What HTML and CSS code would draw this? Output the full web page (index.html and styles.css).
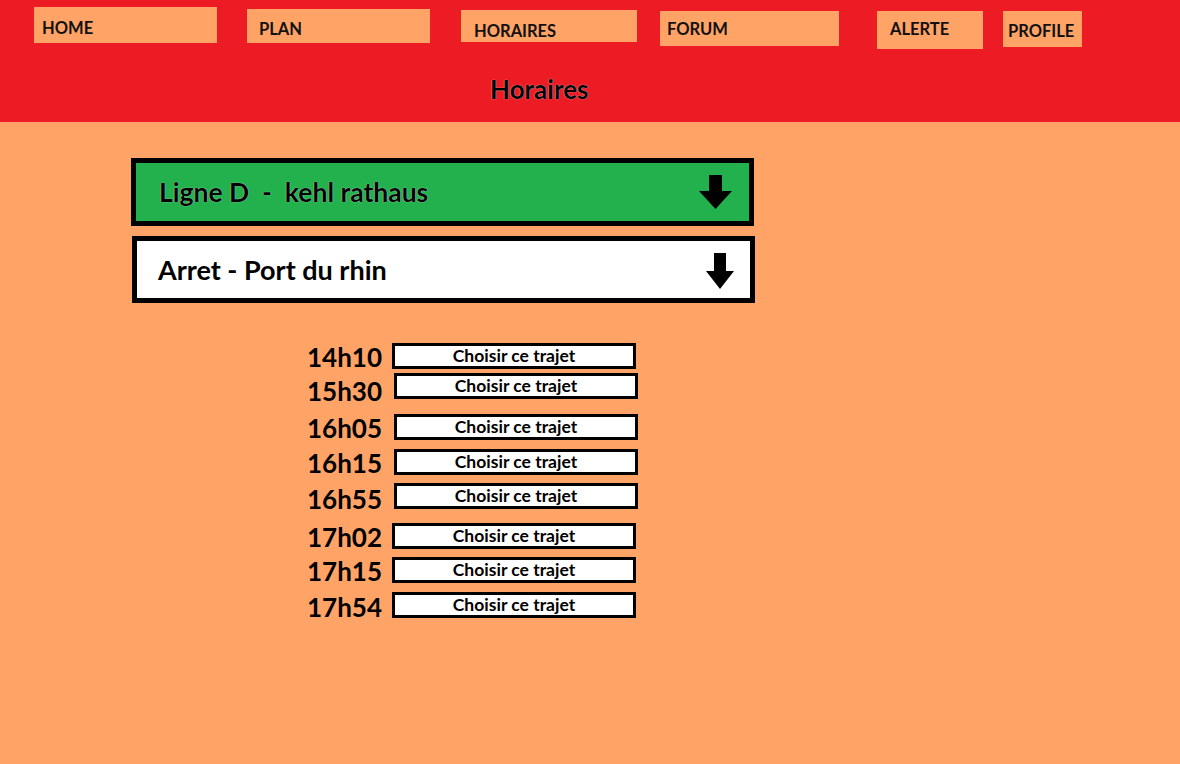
FILE: index.html
```html
<!DOCTYPE html>
<html lang="fr">
<head>
<meta charset="utf-8">
<title>Horaires</title>
<link rel="stylesheet" href="styles.css">
</head>
<body>
<header class="header">
  <nav class="nav">
    <a class="nav-item nav-home">HOME</a>
    <a class="nav-item nav-plan">PLAN</a>
    <a class="nav-item nav-horaires">HORAIRES</a>
    <a class="nav-item nav-forum">FORUM</a>
    <a class="nav-item nav-alerte">ALERTE</a>
    <a class="nav-item nav-profile">PROFILE</a>
  </nav>
  <h1 class="title">Horaires</h1>
</header>
<main class="main">
  <div class="select select-line">
    <span class="select-label">Ligne D &nbsp;-&nbsp; kehl rathaus</span>
    <svg class="arrow arrow-line" viewBox="0 0 33 34" width="33" height="34"><polygon points="10,0 23,0 23,16 33,16 16.5,34 0,16 10,16" fill="#000"/></svg>
  </div>
  <div class="select select-stop">
    <span class="select-label">Arret - Port du rhin</span>
    <svg class="arrow arrow-stop" viewBox="0 0 28 36" width="28" height="36"><polygon points="8,0 20,0 20,18 28,18 14,36 0,18 8,18" fill="#000"/></svg>
  </div>
  <ul class="times">
    <li class="row"><span class="time">14h10</span><button class="choose">Choisir ce trajet</button></li>
    <li class="row"><span class="time">15h30</span><button class="choose">Choisir ce trajet</button></li>
    <li class="row"><span class="time">16h05</span><button class="choose">Choisir ce trajet</button></li>
    <li class="row"><span class="time">16h15</span><button class="choose">Choisir ce trajet</button></li>
    <li class="row"><span class="time">16h55</span><button class="choose">Choisir ce trajet</button></li>
    <li class="row"><span class="time">17h02</span><button class="choose">Choisir ce trajet</button></li>
    <li class="row"><span class="time">17h15</span><button class="choose">Choisir ce trajet</button></li>
    <li class="row"><span class="time">17h54</span><button class="choose">Choisir ce trajet</button></li>
  </ul>
</main>
</body>
</html>
```
FILE: styles.css
```css
* { box-sizing: border-box; }
html, body { margin: 0; padding: 0; }
body {
  width: 1180px;
  height: 764px;
  overflow: hidden;
  background: #ffa366;
  font-family: Lato, "Open Sans", sans-serif;
  font-weight: 700;
  color: #000;
}
.header {
  background: #ed1c24;
  height: 122px;
  padding-top: 7px;
}
.nav {
  display: flex;
  align-items: flex-start;
  padding-left: 34px;
}
.nav-item {
  display: block;
  background: #ffa366;
  font-size: 16.5px;
  line-height: 16px;
  color: #111;
  padding-left: 8px;
}
.nav-home { width: 183px; height: 36px; padding-top: 13px; }
.nav-plan { width: 183px; height: 34px; margin-left: 30px; margin-top: 2px; padding-top: 12px; padding-left: 12px; }
.nav-horaires { width: 176px; height: 32px; margin-left: 31px; margin-top: 3px; padding-top: 13px; padding-left: 13px; }
.nav-forum { width: 179px; height: 35px; margin-left: 23px; margin-top: 4px; padding-top: 10px; padding-left: 7px; }
.nav-alerte { width: 106px; height: 38px; margin-left: 38px; margin-top: 4px; padding-top: 10px; padding-left: 13px; }
.nav-profile { width: 79px; height: 36px; margin-left: 20px; margin-top: 4px; padding-top: 12px; padding-left: 5px; }
.title {
  margin: 27px 0 0 490px;
  font-size: 26px;
  line-height: 26px;
  font-weight: 700;
  color: #000;
  text-shadow: 0 0 1px #fff;
}
.main {
  padding-left: 131px;
  padding-top: 36px;
}
.select {
  display: flex;
  align-items: center;
  justify-content: space-between;
  width: 623px;
  border: 5px solid #000;
}
.select-line {
  height: 68px;
  background: #22b14c;
  padding: 0 17px 0 23px;
}
.select-line .select-label { text-shadow: 0 0 1px #fff; }
.select-stop {
  height: 67px;
  background: #fff;
  margin-top: 10px;
  margin-left: 1px;
  padding: 0 16px 0 21px;
}
.select-label {
  font-size: 26.5px;
  line-height: 30px;
}
.select-stop .select-label { font-size: 27px; }
.arrow-line { margin-top: 0; }
.arrow-stop { margin-top: 2px; }
.times {
  list-style: none;
  margin: 40px 0 0 0;
  padding: 0 0 0 176px;
}
.row {
  display: flex;
  align-items: center;
  height: 25px;
}
.row:nth-child(2) { margin-top: 5px; }
.row:nth-child(3) { margin-top: 16px; }
.row:nth-child(4) { margin-top: 10px; }
.row:nth-child(5) { margin-top: 9px; }
.row:nth-child(6) { margin-top: 15px; }
.row:nth-child(7) { margin-top: 9px; }
.row:nth-child(8) { margin-top: 10px; }
.time {
  width: 85px;
  font-size: 26px;
  line-height: 25px;
  position: relative;
  top: 2px;
}
.row:nth-child(2) .time { top: 6px; }
.row:nth-child(5) .time { top: 4px; }
.row:nth-child(8) .time { top: 3px; }
.choose {
  margin-left: 0;
  width: 244px;
  height: 26px;
  border: 3px solid #000;
  background: #fff;
  font-family: Lato, "Open Sans", sans-serif;
  font-weight: 700;
  font-size: 17.5px;
  line-height: 18px;
  padding: 0;
  color: #000;
}
.row:nth-child(2) .choose,
.row:nth-child(3) .choose,
.row:nth-child(4) .choose,
.row:nth-child(5) .choose { margin-left: 2px; }
```
